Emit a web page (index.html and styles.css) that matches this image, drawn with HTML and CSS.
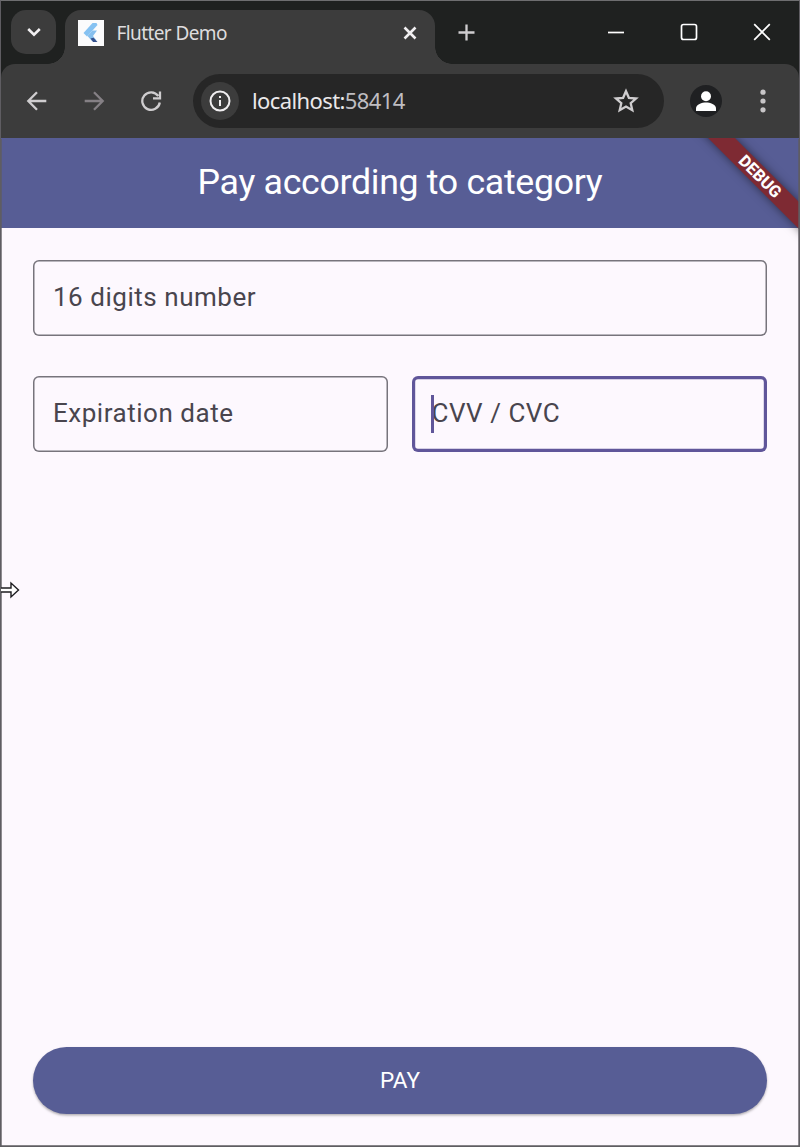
FILE: index.html
```html
<!DOCTYPE html>
<html lang="en">
<head>
<meta charset="utf-8">
<title>Flutter Demo</title>
<link rel="stylesheet" href="styles.css">
</head>
<body>
<div class="window">
  <header class="tabstrip">
    <div class="tab-search"><svg width="14" height="10" viewBox="0 0 14 10"><path d="M1.200 2l5.800 5.600L12.800 2" class="stroke bold"/></svg></div>
    <div class="tab">
      <svg class="favicon" width="26" height="26" viewBox="0 0 26 26">
        <rect width="26" height="26" fill="#fbfbfc"/>
        <path d="M18.500 3h-4L5.500 13l3.500 3.500L19.500 5z" fill="#86c2f2"/>
        <path d="M19 10.500h-4.500L9.500 16l4 4.500h5L15 16z" fill="#86bfee"/>
        <path d="M12.500 18.500l3-.8 4 4.300h-4.500z" fill="#34508c"/>
      </svg>
      <span class="tab-title">Flutter Demo</span>
      <svg class="tab-close" width="14" height="14" viewBox="0 0 14 14"><path d="M1.500 1.500l11 11M12.500 1.500l-11 11" class="stroke bold"/></svg>
    </div>
    <svg class="new-tab" width="17" height="17" viewBox="0 0 17 17"><path d="M8.500 .5v16M.5 8.500h16" class="stroke soft"/></svg>
    <div class="caption">
      <svg width="18" height="18" viewBox="0 0 18 18"><path d="M1 9.500h16" class="stroke thin"/></svg>
      <svg width="18" height="18" viewBox="0 0 18 18"><rect x="1.500" y="1.500" width="15" height="15" rx="2" class="stroke thin"/></svg>
      <svg width="18" height="18" viewBox="0 0 18 18"><path d="M1.200 1.200l15.600 15.600M16.800 1.200L1.200 16.800" class="stroke thin"/></svg>
    </div>
  </header>
  <nav class="toolbar">
    <svg class="back" width="22" height="22" viewBox="0 0 22 22"><path d="M20.300 11H2.500M11 2.300L2.300 11l8.700 8.700" class="stroke soft"/></svg>
    <svg class="forward" width="22" height="22" viewBox="0 0 22 22"><path d="M1.700 11h17.800M11 2.300l8.700 8.700-8.700 8.700" class="stroke dim"/></svg>
    <svg class="reload" width="22" height="22" viewBox="0 0 22 22"><path d="M19.800 12.500A8.800 8.800 0 1 1 18.300 6M20 1.500v6.800h-7" class="stroke soft"/></svg>
    <div class="omnibox">
      <div class="site-info"><svg width="22" height="22" viewBox="0 0 22 22"><circle cx="11" cy="11" r="9.500" class="stroke"/><path d="M11 10v6M11 6v2" class="stroke"/></svg></div>
      <span class="url">localhost:<span class="port">58414</span></span>
      <svg class="star" width="26" height="26" viewBox="0 0 26 26"><path d="M13 3.200l2.900 6.600 7.200.7-5.400 4.700 1.600 7L13 18.500l-6.300 3.700 1.600-7-5.400-4.700 7.200-.7z" class="stroke soft"/></svg>
    </div>
    <svg class="profile" width="32" height="32" viewBox="0 0 32 32"><circle cx="16" cy="16" r="16" fill="#1f2022"/><circle cx="16" cy="11.300" r="5" fill="#fff"/><path d="M6 26v-2.500c0-4.200 6-6 10-6s10 1.800 10 6V26z" fill="#fff"/></svg>
    <svg class="menu" width="6" height="24" viewBox="0 0 6 24"><g fill="#c8c6c8"><circle cx="3" cy="3.200" r="2.600"/><circle cx="3" cy="12" r="2.600"/><circle cx="3" cy="20.800" r="2.600"/></g></svg>
  </nav>
  <main class="app">
    <div class="appbar"><h1>Pay according to category</h1></div>
    <div class="ribbon-clip"><div class="ribbon">DEBUG</div></div>
    <form class="form">
      <div class="field"><span>16 digits number</span></div>
      <div class="row">
        <div class="field"><span>Expiration date</span></div>
        <div class="field focused"><span>CVV / CVC</span><i class="caret"></i></div>
      </div>
    </form>
    <button class="pay" type="button">PAY</button>
  </main>
  <svg class="pointer" width="20" height="18" viewBox="0 0 20 18"><path d="M-2 7h13V2l7.500 7-7.500 7v-5H-2z" fill="#fff" stroke="#1c1b1f" stroke-width="1.400"/></svg>
</div>
</body>
</html>
```
FILE: styles.css
```css
* { box-sizing: border-box; }
body { margin: 0; background: #fdf8fe; }
svg { display: block; flex: none; }
.window {
  position: relative;
  width: 800px;
  height: 1147px;
  display: flex;
  flex-direction: column;
  overflow: hidden;
  border: 1px solid #5f5d62;
  border-top-color: #6e6e70;
  background: #1f2120;
}
.stroke { fill: none; stroke: #f1eff1; stroke-width: 2; }
.bold { stroke-width: 2.600; }
.soft { stroke: #cfcdcf; stroke-width: 2.300; }
.dim { stroke: #858085; stroke-width: 2.300; }
.thin { stroke: #fff; stroke-width: 1.700; }

.tabstrip { height: 63px; flex: none; display: flex; align-items: flex-start; }
.tab-search {
  width: 45px;
  height: 44px;
  margin: 9px 9px 0 10px;
  border-radius: 15px;
  background: #3c3c3c;
  display: grid;
  place-items: center;
}
.tab {
  position: relative;
  width: 370px;
  height: 54px;
  margin-top: 9px;
  padding: 0 18.500px 9px 13px;
  display: flex;
  align-items: center;
  border-radius: 16px 16px 0 0;
  background: #3c3c3c;
}
.tab::before, .tab::after {
  content: "";
  position: absolute;
  bottom: 0;
  width: 17px;
  height: 17px;
}
.tab::before { left: -17px; background: radial-gradient(circle at 0 0, transparent 16.500px, #3c3c3c 17px); }
.tab::after { right: -17px; background: radial-gradient(circle at 100% 0, transparent 16.500px, #3c3c3c 17px); }
.tab-title {
  margin-left: 12.500px;
  flex: 1;
  font: 19px/26px "Noto Sans", sans-serif;
  letter-spacing: -0.6px;
  color: #dedcde;
}
.new-tab { margin: 23px 0 0 23px; }
.caption { display: flex; gap: 55px; margin: 22px 28px 0 auto; }

.toolbar {
  height: 74px;
  flex: none;
  display: flex;
  align-items: center;
  padding: 0 33px 1px 25px;
  border-radius: 14px 14px 0 0;
  background: #3c3c3c;
}
.forward { margin-left: 35px; }
.reload { margin-left: 35px; }
.omnibox {
  width: 471px;
  height: 54px;
  margin-left: 31px;
  padding: 0 25px 0 8px;
  display: flex;
  align-items: center;
  border-radius: 27px;
  background: #262626;
}
.site-info {
  width: 38px;
  height: 38px;
  border-radius: 50%;
  background: #3c3c3c;
  display: grid;
  place-items: center;
}
.url {
  margin: -2px 0 0 13px;
  flex: 1;
  font: 22px/30px "Noto Sans", sans-serif;
  letter-spacing: -0.6px;
  color: #eae8ea;
}
.port { color: #bfbdc1; }
.profile { margin-left: 26px; }
.menu { margin-left: auto; }

.app {
  position: relative;
  flex: 1;
  display: flex;
  flex-direction: column;
  font-family: Roboto, sans-serif;
  background: #fdf8fe;
}
.app::after {
  content: "";
  position: absolute;
  inset: -1px 0 0;
  box-shadow: inset 0 0 0 .7px #5f5d62;
  clip-path: inset(2px 0 0 0);
  pointer-events: none;
}
.appbar {
  height: 90px;
  padding-bottom: 3px;
  display: grid;
  place-items: center;
  background: #575d95;
}
h1 { margin: 0; font-size: 35.700px; font-weight: 400; line-height: 46px; letter-spacing: -0.3px; color: #fff; }
.ribbon-clip {
  position: absolute;
  top: 0;
  right: 0;
  width: 120px;
  height: 120px;
  overflow: hidden;
}
.ribbon {
  position: absolute;
  left: -19px;
  top: 28.500px;
  width: 200px;
  height: 19px;
  transform: rotate(45deg);
  background: #7e2a33;
  box-shadow: 0 0 10px rgba(0, 0, 0, .5);
  font-size: 16.500px;
  font-weight: 800;
  line-height: 19px;
  text-align: center;
  color: #fff;
}
.form { padding: 31.500px 32.400px; display: flex; flex-direction: column; gap: 40px; }
.row { display: grid; grid-template-columns: 1fr 1fr; gap: 24px; }
.field {
  position: relative;
  height: 76px;
  padding: 0 19.500px 2px;
  display: flex;
  align-items: center;
  box-shadow: inset 0 0 0 1.500px #77747c;
  border-radius: 6px;
  font-size: 26px;
  letter-spacing: .54px;
  color: #49454e;
}
.focused { box-shadow: inset 0 0 0 3.200px #60569a; }
.caret {
  position: absolute;
  left: 19px;
  top: 19px;
  width: 3px;
  height: 38px;
  background: #60569a;
}
.pay {
  margin: auto 32.400px 32px;
  height: 67px;
  padding: 0 0 1px;
  border: 0;
  border-radius: 34px;
  background: #575d95;
  box-shadow: 0 1.500px 2.500px rgba(0, 0, 0, .3);
  font: 22.500px/30px Roboto, sans-serif;
  color: #fff;
}
.pointer { position: absolute; left: -1px; top: 580px; }
```
